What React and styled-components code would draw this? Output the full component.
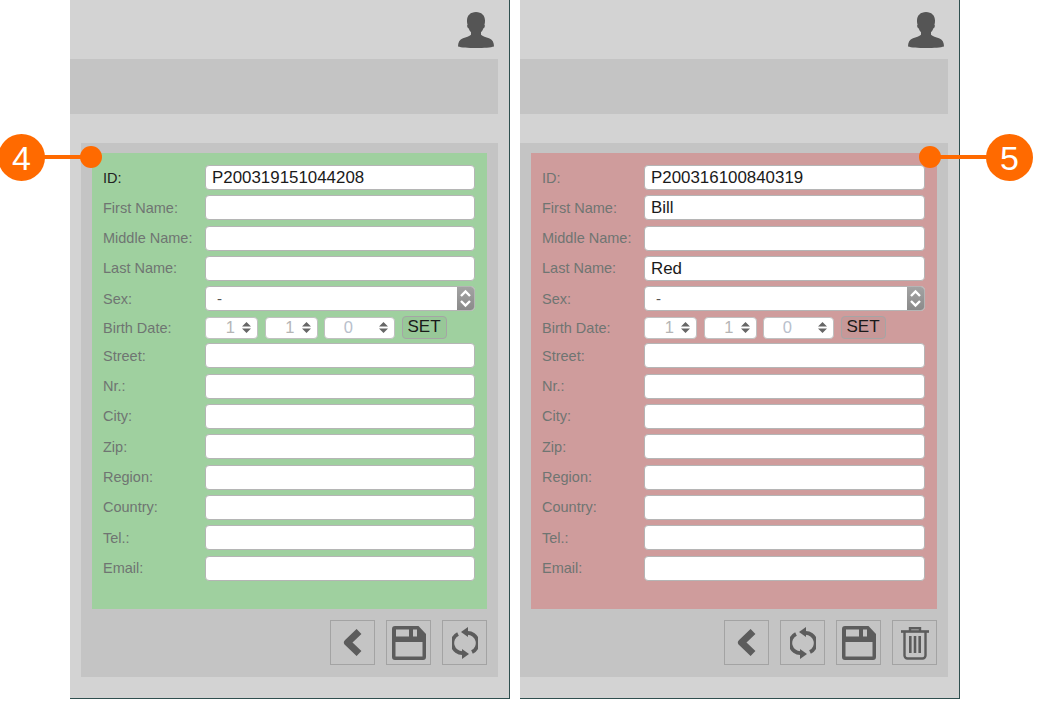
import styled, { createGlobalStyle } from 'styled-components';

const GlobalStyle = createGlobalStyle`
  html, body {
    margin: 0;
    background: #fff;
  }
  body {
    font-family: "Liberation Sans", Arial, sans-serif;
  }
`;

const Page = styled.div`
  position: relative;
  width: 1057px;
  height: 720px;
  padding-left: 70px;
  box-sizing: border-box;
  display: flex;
  gap: 10px;
  overflow: hidden;
`;

const Panel = styled.div`
  width: 440px;
  height: 699px;
  box-sizing: border-box;
  background: #d3d3d3;
  border-right: 1px solid #2f4f4f;
  border-bottom: 1px solid #2f4f4f;
  display: flex;
  flex-direction: column;
`;

const Header = styled.div`
  height: 59px;
  flex: none;
  display: flex;
  justify-content: flex-end;
  align-items: flex-start;
  padding: 12px 15px 0 0;
  box-sizing: border-box;
`;

const Band = styled.div`
  width: 428px;
  height: 55px;
  flex: none;
  background: #c4c4c4;
`;

const Section = styled.div`
  width: ${(p) => (p.$wide ? '428px' : '417px')};
  height: 534px;
  margin: 29px 0 0 ${(p) => (p.$wide ? '0' : '11px')};
  padding: 10px 11px 0;
  box-sizing: border-box;
  background: #c4c4c4;
  flex: none;
`;

const Form = styled.div`
  height: 456px;
  box-sizing: border-box;
  padding: 12px 12px 0 11px;
  background: ${(p) => p.$bg};
  display: flex;
  flex-direction: column;
`;

const Row = styled.div`
  display: flex;
  align-items: center;
  height: ${(p) => p.$h || 25}px;
  margin-bottom: ${(p) => p.$gap || 5.32}px;
  flex: none;
`;

const Label = styled.div`
  width: 102px;
  flex: none;
  font-size: 14.5px;
  color: ${(p) => (p.$strong ? '#222' : '#6f7572')};
`;

const Input = styled.div`
  flex: 1;
  height: 25px;
  box-sizing: border-box;
  background: #fff;
  border: 1px solid #b5b5b5;
  border-radius: 4px;
  padding-left: 6px;
  font-size: 16.9px;
  line-height: 23px;
  color: #1a1a1a;
  white-space: nowrap;
  overflow: hidden;
`;

const Select = styled(Input)`
  position: relative;
  padding-left: 11px;
  font-size: 15px;
  color: #555;
`;

const SelectArrows = styled.div`
  position: absolute;
  right: 0;
  top: 0;
  bottom: 0;
  width: 17px;
  background: linear-gradient(#a3a3a3, #8a8a8a);
  display: flex;
  align-items: center;
  justify-content: center;
`;

const DateGroup = styled.div`
  display: flex;
  align-items: center;
  gap: 6.5px;
`;

const Spin = styled.div`
  width: ${(p) => p.$w}px;
  height: 22px;
  box-sizing: border-box;
  background: #fff;
  border: 1px solid #c0c0c0;
  border-radius: 4px;
  display: flex;
  align-items: center;
  justify-content: flex-end;
  gap: 7px;
  padding-right: 6px;
  font-size: 16.5px;
  color: ${(p) => p.$color};
`;

const SpinValue = styled.span`
  margin-right: ${(p) => p.$mr || 0}px;
`;

const SetButton = styled.div`
  width: 45px;
  height: 23px;
  box-sizing: border-box;
  border: 1px solid #a5a5a5;
  border-radius: 4px;
  background: ${(p) => p.$bg};
  font-size: 17px;
  line-height: 19px;
  text-align: center;
  color: #1a1a1a;
`;

const Toolbar = styled.div`
  display: flex;
  justify-content: flex-end;
  gap: 11px;
  margin-top: 11px;
`;

const ToolButton = styled.div`
  width: 45px;
  height: 45px;
  box-sizing: border-box;
  border: 1px solid #a3a3a3;
  display: flex;
  align-items: center;
  justify-content: center;
`;

const Callout = styled.div`
  position: absolute;
  top: 134px;
  left: ${(p) => p.$left}px;
  width: 47px;
  height: 47px;
  border-radius: 50%;
  background: #ff6a00;
  color: #fff;
  font-size: 34px;
  line-height: 48px;
  text-align: center;
`;

const Leader = styled.div`
  position: absolute;
  top: 155px;
  left: ${(p) => p.$left}px;
  width: ${(p) => p.$w}px;
  height: 4px;
  background: #ff6a00;
`;

const Dot = styled.div`
  position: absolute;
  top: 146px;
  left: ${(p) => p.$left}px;
  width: 22px;
  height: 22px;
  border-radius: 50%;
  background: #ff6a00;
`;

const UserIcon = () => (
  <svg width="36" height="36" viewBox="0 0 36 36">
    <path
      fill="#555"
      d="M18 0c-5.500 0-9 3.500-9 8.500 0 1.500.1 3 .6 4-.5.300-.6 1.500-.2 2.500.3.800.7 1.200 1.200 1.300.5 1.700 1.300 3 2.400 4v2.500c-1.500 1.500-5 2.500-8 3.500C1.500 27.600 0 30.500 0 34.500c3 1 10 1.500 18 1.500s15-.5 18-1.500c0-4-1.500-6.900-5-8.200-3-1-6.500-2-8-3.500v-2.500c1.100-1 1.900-2.300 2.400-4 .5-.1.900-.5 1.200-1.300.4-1 .3-2.200-.2-2.500.5-1 .6-2.500.6-4C27 3.500 23.500 0 18 0z"
    />
  </svg>
);

const BackIcon = () => (
  <svg width="19" height="27" viewBox="0 0 19 27">
    <path d="M16 2.500 L4.500 13.500 L16 24.500" fill="none" stroke="#5c5c5c" strokeWidth="7" strokeLinejoin="round" />
  </svg>
);

const SaveIcon = () => (
  <svg width="34" height="34" viewBox="0 0 34 34">
    <path
      fill="#5c5c5c"
      fillRule="evenodd"
      d="M3 0H26.500L34 8V31a3 3 0 0 1-3 3H3a3 3 0 0 1-3-3V3a3 3 0 0 1 3-3zM4 3.500V10.500H17V3.500zM21 3.500V10.500H25V3.500zM3.500 16V30.500H30.500V16z"
    />
  </svg>
);

const SyncIcon = () => (
  <svg width="26" height="32" viewBox="0 0 26 32">
    <g fill="none" stroke="#5c5c5c" strokeWidth="3.800">
      <path d="M15 6A10 10 0 0 1 20 25" />
      <path d="M11 26A10 10 0 0 1 6 7" />
    </g>
    <path fill="#5c5c5c" d="M9 5 L16 0 L16 10z" />
    <path fill="#5c5c5c" d="M17 27 L10 22 L10 32z" />
  </svg>
);

const TrashIcon = () => (
  <svg width="28" height="34" viewBox="0 0 28 34">
    <g fill="none" stroke="#5c5c5c">
      <path strokeWidth="2.400" d="M9 5V2.200H19V5" />
      <path strokeWidth="2.600" d="M0 5.500H28" />
      <path strokeWidth="2.400" d="M3.500 6V29.500a3 3 0 0 0 3 3H21.500a3 3 0 0 0 3-3V6" />
    </g>
    <rect x="8" y="10" width="2.600" height="17" fill="#5c5c5c" />
    <rect x="12.700" y="10" width="2.600" height="17" fill="#5c5c5c" />
    <rect x="17.400" y="10" width="2.600" height="17" fill="#5c5c5c" />
  </svg>
);

const SpinArrows = () => (
  <svg width="9" height="11" viewBox="0 0 9 11">
    <path fill="#666" d="M4.500 0L9 4.500H0zM4.500 11L0 6.500H9z" />
  </svg>
);

const SelectChevrons = () => (
  <svg width="13" height="21" viewBox="0 0 13 21">
    <path
      d="M2 8L6.500 3.500L11 8M2 13L6.500 17.500L11 13"
      fill="none"
      stroke="#fff"
      strokeWidth="2.400"
    />
  </svg>
);

const fieldsBefore = ['First Name:', 'Middle Name:', 'Last Name:'];
const fieldsAfter = ['Street:', 'Nr.:', 'City:', 'Zip:', 'Region:', 'Country:', 'Tel.:', 'Email:'];

const PersonPanel = ({ wide, bg, setBg, id, values, tools }) => (
  <Panel>
    <Header>
      <UserIcon />
    </Header>
    <Band />
    <Section $wide={wide}>
      <Form $bg={bg}>
        <Row>
          <Label $strong={!wide}>ID:</Label>
          <Input>{id}</Input>
        </Row>
        {fieldsBefore.map((name) => (
          <Row key={name}>
            <Label>{name}</Label>
            <Input>{values[name]}</Input>
          </Row>
        ))}
        <Row>
          <Label>Sex:</Label>
          <Select>
            -
            <SelectArrows>
              <SelectChevrons />
            </SelectArrows>
          </Select>
        </Row>
        <Row $h={22} $gap={4.8}>
          <Label>Birth Date:</Label>
          <DateGroup>
            <Spin $w={53} $color="#b5b5b5">
              <SpinValue>1</SpinValue>
              <SpinArrows />
            </Spin>
            <Spin $w={53} $color="#b5b5b5">
              <SpinValue>1</SpinValue>
              <SpinArrows />
            </Spin>
            <Spin $w={71} $color="#b9c0cc">
              <SpinValue $mr={19}>0</SpinValue>
              <SpinArrows />
            </Spin>
            <SetButton $bg={setBg}>SET</SetButton>
          </DateGroup>
        </Row>
        {fieldsAfter.map((name) => (
          <Row key={name}>
            <Label>{name}</Label>
            <Input />
          </Row>
        ))}
      </Form>
      <Toolbar>
        {tools.map((Icon, i) => (
          <ToolButton key={i}>
            <Icon />
          </ToolButton>
        ))}
      </Toolbar>
    </Section>
  </Panel>
);

export default function App() {
  return (
    <>
      <GlobalStyle />
      <Page>
        <PersonPanel
          bg="#9fd09f"
          setBg="#98c898"
          id="P200319151044208"
          values={{}}
          tools={[BackIcon, SaveIcon, SyncIcon]}
        />
        <PersonPanel
          wide
          bg="#cf9c9c"
          setBg="#c79898"
          id="P200316100840319"
          values={{ 'First Name:': 'Bill', 'Last Name:': 'Red' }}
          tools={[BackIcon, SyncIcon, SaveIcon, TrashIcon]}
        />
        <Callout $left={-2}>4</Callout>
        <Leader $left={44} $w={40} />
        <Dot $left={80} />
        <Callout $left={986}>5</Callout>
        <Leader $left={935} $w={55} />
        <Dot $left={919} />
      </Page>
    </>
  );
}
